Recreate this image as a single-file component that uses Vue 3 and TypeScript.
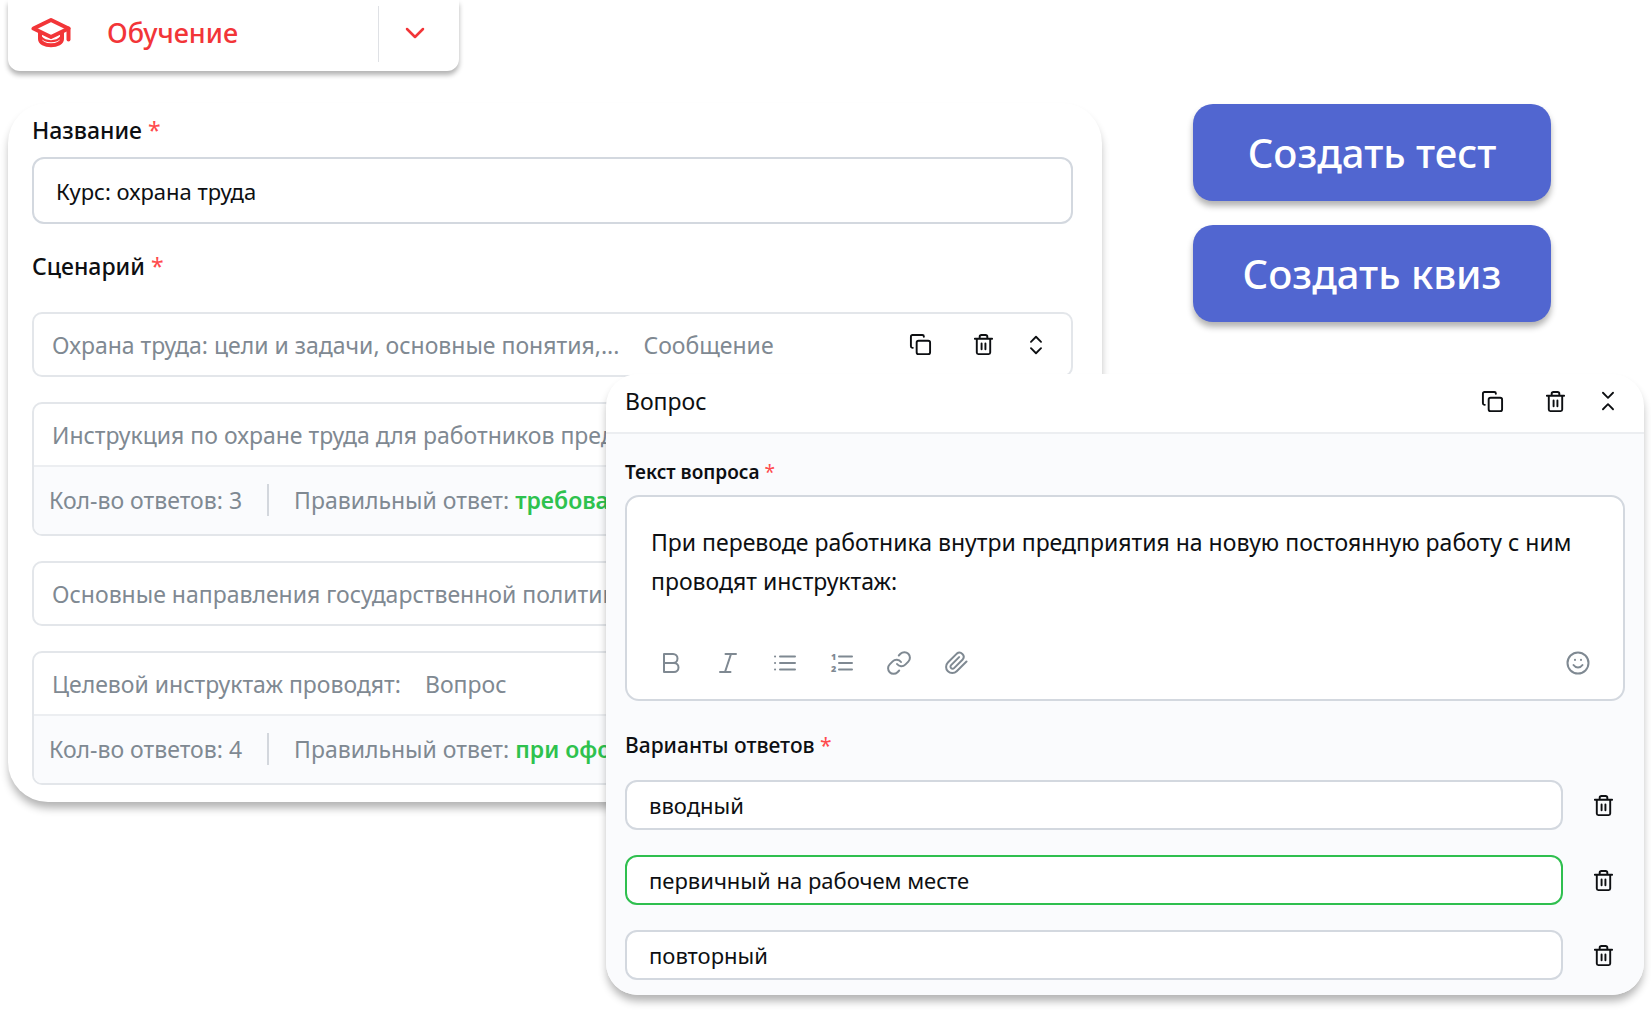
<script setup lang="ts">
import { ref } from 'vue'

interface ScenarioItem {
  title: string
  kind?: string
  answers?: number
  correct?: string
  actions?: boolean
}

interface Option {
  text: string
  correct: boolean
}

const courseName = ref('Курс: охрана труда')
const questionText = ref(
  'При переводе работника внутри предприятия на новую постоянную работу с ним проводят инструктаж:'
)

const scenario: ScenarioItem[] = [
  { title: 'Охрана труда: цели и задачи, основные понятия,...', kind: 'Сообщение', actions: true },
  { title: 'Инструкция по охране труда для работников предприятия', answers: 3, correct: 'требования' },
  { title: 'Основные направления государственной политики' },
  { title: 'Целевой инструктаж проводят:', kind: 'Вопрос', answers: 4, correct: 'при оформлении' }
]

const options = ref<Option[]>([
  { text: 'вводный', correct: false },
  { text: 'первичный на рабочем месте', correct: true },
  { text: 'повторный', correct: false }
])
</script>

<template>
  <svg class="sprite" aria-hidden="true">
    <symbol id="i-copy" viewBox="0 0 24 24">
      <rect x="8" y="8" width="14" height="14" rx="2" />
      <path d="M4 15.5H3.6A1.6 1.6 0 0 1 2 13.9V3.6A1.6 1.6 0 0 1 3.6 2h10.3a1.6 1.6 0 0 1 1.6 1.6V4" />
    </symbol>
    <symbol id="i-trash" viewBox="0 0 24 24">
      <path d="M3 6h18M5 6v14.400A1.600 1.600 0 0 0 6.600 22h10.800a1.600 1.600 0 0 0 1.600-1.600V6M8 6V4a2 2 0 0 1 2-2h4a2 2 0 0 1 2 2v2M10 11v6M14 11v6" />
    </symbol>
    <symbol id="i-expand" viewBox="0 0 24 24">
      <path d="M6.500 8.500l5.500-5.500 5.500 5.500M6.500 15.500l5.500 5.500 5.500-5.500" />
    </symbol>
    <symbol id="i-collapse" viewBox="0 0 24 24">
      <path d="M6.500 3l5.500 5.500 5.500-5.500M6.500 21l5.500-5.500 5.500 5.500" />
    </symbol>
  </svg>

  <main class="page">
    <div class="course">
      <nav class="tab">
        <a class="tab-link" href="#">
          <svg class="cap" viewBox="0 0 40 32" aria-hidden="true">
            <path d="M20 3L37.500 11.500 20 20 2.500 11.500z" />
            <path d="M9 15.500v6.500c0 3.700 4.800 6.300 11 6.300s11-2.600 11-6.300V15.500" />
            <path class="cap-fold" d="M10 20c2.500 3 6 4.200 10 4.200s7.500-1.200 10-4.200" />
            <path d="M37.500 11.500V22.500" />
          </svg>
          <span>Обучение</span>
        </a>
        <button class="tab-toggle" type="button" aria-label="Развернуть">
          <svg viewBox="0 0 24 24" aria-hidden="true"><path d="M4 8l8 8 8-8" /></svg>
        </button>
      </nav>

      <section class="card course-card">
        <label class="label" for="course-name">Название <b>*</b></label>
        <input id="course-name" v-model="courseName" class="field field-tall" type="text" />

        <h2 class="label label-scenario">Сценарий <b>*</b></h2>
        <ul class="scenario">
          <li v-for="item in scenario" :key="item.title" class="item">
            <div class="item-head">
              <span>{{ item.title }}</span>
              <span v-if="item.kind">{{ item.kind }}</span>
              <div v-if="item.actions" class="actions">
                <button type="button" aria-label="Копировать"><svg class="icon"><use href="#i-copy" /></svg></button>
                <button type="button" aria-label="Удалить"><svg class="icon"><use href="#i-trash" /></svg></button>
                <button type="button" aria-label="Раскрыть"><svg class="icon icon-small"><use href="#i-expand" /></svg></button>
              </div>
            </div>
            <div v-if="item.answers" class="item-foot">
              <span class="count">Кол-во ответов: {{ item.answers }}</span>
              <span>Правильный ответ: <strong>{{ item.correct }}</strong></span>
            </div>
          </li>
        </ul>
      </section>
    </div>

    <div class="create">
      <button type="button">Создать тест</button>
      <button type="button">Создать квиз</button>
    </div>

    <section class="card question-card">
      <header class="question-head">
        <h2>Вопрос</h2>
        <div class="actions">
          <button type="button" aria-label="Копировать"><svg class="icon"><use href="#i-copy" /></svg></button>
          <button type="button" aria-label="Удалить"><svg class="icon"><use href="#i-trash" /></svg></button>
          <button type="button" aria-label="Свернуть"><svg class="icon icon-small"><use href="#i-collapse" /></svg></button>
        </div>
      </header>

      <div class="question-body">
        <label class="label label-question" for="question-text">Текст вопроса <b>*</b></label>
        <div class="editor">
          <textarea id="question-text" v-model="questionText" rows="2"></textarea>
          <div class="toolbar">
            <button type="button" aria-label="Жирный">
              <svg viewBox="0 0 24 24"><path d="M5 3h9a4.500 4.500 0 0 1 0 9H5zM5 12h10a4.500 4.500 0 0 1 0 9H5z" /></svg>
            </button>
            <button type="button" aria-label="Курсив">
              <svg viewBox="0 0 24 24"><path d="M9.500 3H20M4 21h10.500M15 3L9 21" /></svg>
            </button>
            <button type="button" aria-label="Маркированный список">
              <svg viewBox="0 0 24 24"><path d="M7 5.500h15M7 12h15M7 18.500h15M2 5.500h.100M2 12h.100M2 18.500h.100" /></svg>
            </button>
            <button type="button" aria-label="Нумерованный список">
              <svg viewBox="0 0 24 24">
                <path d="M9 5.500h13M9 12h13M9 18.500h13" />
                <text x="1" y="9">1</text>
                <text x="1" y="21">2</text>
              </svg>
            </button>
            <button type="button" aria-label="Ссылка">
              <svg viewBox="0 0 24 24">
                <path d="M10 13a5.500 5.500 0 0 0 8.300.600l3-3a5.500 5.500 0 0 0-7.800-7.800l-1.700 1.700" />
                <path d="M14 11a5.500 5.500 0 0 0-8.300-.600l-3 3a5.500 5.500 0 0 0 7.800 7.800l1.700-1.700" />
              </svg>
            </button>
            <button type="button" aria-label="Вложение">
              <svg viewBox="0 0 24 24">
                <path d="M22.500 10.500l-9.800 9.800a6.200 6.200 0 0 1-8.800-8.800l8.900-8.900a4.200 4.200 0 0 1 5.900 5.900l-8.600 8.600a2.100 2.100 0 0 1-3-3l8-8" />
              </svg>
            </button>
            <button class="emoji" type="button" aria-label="Эмодзи">
              <svg viewBox="0 0 24 24">
                <circle cx="12" cy="12" r="10.500" />
                <path d="M7.500 14c1.200 1.700 2.700 2.500 4.500 2.500s3.300-.800 4.500-2.500M9 8.800v.100M15 8.800v.100" />
              </svg>
            </button>
          </div>
        </div>

        <h3 class="label label-options">Варианты ответов <b>*</b></h3>
        <ul class="options">
          <li v-for="(option, i) in options" :key="i">
            <input
              v-model="option.text"
              class="field"
              :class="{ correct: option.correct }"
              type="text"
              :aria-label="`Вариант ${i + 1}`"
            />
            <button type="button" aria-label="Удалить"><svg class="icon"><use href="#i-trash" /></svg></button>
          </li>
        </ul>
      </div>
    </section>
  </main>
</template>

<style>
body {
  margin: 0;
  background: #fff;
}
</style>

<style scoped>
.sprite {
  position: absolute;
  width: 0;
  height: 0;
}

.page {
  display: grid;
  grid-template-columns: 598fr 496fr 542fr;
  padding: 0 7px 15px 8px;
  font-family: 'Noto Sans', 'Open Sans', sans-serif;
  font-size: 23px;
  line-height: 32px;
  color: #0d0f12;
}

h2,
h3,
ul {
  margin: 0;
  padding: 0;
  list-style: none;
}

button,
input,
textarea {
  box-sizing: border-box;
  margin: 0;
  padding: 0;
  border: 0;
  background: none;
  color: inherit;
  font: inherit;
}

svg {
  display: block;
  fill: none;
  stroke: currentColor;
  stroke-width: 2;
  stroke-linecap: round;
  stroke-linejoin: round;
}

.course {
  grid-area: 1 / 1 / 2 / 3;
  min-width: 0;
}

/* Section tab */
.tab {
  display: flex;
  box-sizing: border-box;
  width: 451px;
  height: 71px;
  padding: 6px 0 9px;
  border-radius: 0 0 12px 12px;
  background: #fff;
  box-shadow: 0 4px 5px rgba(0, 0, 0, 0.3);
  color: #f23538;
}

.tab-link {
  display: flex;
  flex: 1;
  align-items: center;
  gap: 36px;
  padding: 0 0 2px 23px;
  color: inherit;
  font-size: 27px;
  font-weight: 500;
  text-decoration: none;
}

.cap {
  width: 40px;
  height: 32px;
  stroke-width: 4;
}

.cap-fold {
  stroke-width: 2;
}

.tab-toggle {
  display: flex;
  align-items: center;
  justify-content: center;
  width: 81px;
  padding: 0 9px 2px 0;
  border-left: 1px solid #dfe1e5;
}

.tab-toggle svg {
  width: 24px;
  height: 24px;
  stroke-width: 2.5;
}

/* Cards */
.card {
  box-sizing: border-box;
  background: #fff;
  box-shadow: 0 7px 8px -1px rgba(0, 0, 0, 0.3);
}

.course-card {
  margin-top: 32px;
  padding: 11px 29px 17px 24px;
  border-radius: 40px;
}

.label {
  display: block;
  font-size: 23px;
  font-weight: 500;
  line-height: 32px;
}

.label b {
  color: #ff4a4d;
  font-weight: 400;
}

.label-question {
  font-size: 19px;
  font-weight: 600;
}

.field {
  display: block;
  width: 100%;
  height: 50px;
  padding: 0 22px;
  border: 2px solid #d3d8df;
  border-radius: 12px;
  background: #fff;
  font-size: 22px;
}

.field-tall {
  height: 67px;
  margin-top: 11px;
}

.field.correct {
  border-color: #2fbf4f;
}

.label-scenario {
  margin-top: 26px;
}

.scenario {
  display: grid;
  gap: 25px;
  margin-top: 30px;
}

.item {
  overflow: hidden;
  border: 2px solid #e3e6ea;
  border-radius: 10px;
  color: #7f8992;
  white-space: nowrap;
}

.item-head {
  display: flex;
  align-items: center;
  gap: 24px;
  height: 61px;
  padding: 0 24px 0 18px;
}

.item-foot {
  display: flex;
  align-items: center;
  height: 65px;
  padding: 0 0 2px 15px;
  border-top: 2px solid #eceef1;
  background: #fafbfd;
}

.count {
  padding-right: 25px;
  margin-right: 25px;
  border-right: 2px solid #d3d7dd;
}

.item-foot strong {
  color: #2ec24e;
  font-weight: 600;
}

.actions {
  display: flex;
  align-items: center;
  gap: 40px;
  margin-left: auto;
  color: #0d0f12;
}

.actions button:last-child {
  margin-left: -10px;
}

.icon {
  width: 23px;
  height: 23px;
}

.icon-small {
  width: 22px;
  height: 22px;
}

/* Create buttons */
.create {
  display: grid;
  grid-area: 1 / 3 / 2 / 4;
  align-content: start;
  justify-items: center;
  gap: 24px;
  padding: 104px 2px 0 0;
}

.create button {
  width: 358px;
  height: 97px;
  border-radius: 20px;
  background: #5166d0;
  box-shadow: 0 5px 6px rgba(0, 0, 0, 0.3);
  color: #fff;
  font-size: 40px;
  font-weight: 500;
}

/* Question editor */
.question-card {
  z-index: 1;
  grid-area: 1 / 2 / 2 / 4;
  align-self: start;
  min-width: 0;
  margin-top: 374px;
  overflow: hidden;
  border-radius: 32px;
}

.question-head {
  display: flex;
  align-items: center;
  height: 54px;
  padding: 0 25px 4px 19px;
  border-bottom: 2px solid #eceef1;
}

.question-head h2 {
  font-size: 23px;
  font-weight: 400;
}

.question-body {
  padding: 22px 19px 15px;
  background: #fafbfd;
}

.editor {
  margin-top: 7px;
  padding: 26px 33px 24px 24px;
  border: 2px solid #d3d8df;
  border-radius: 14px;
  background: #fff;
}

.editor textarea {
  display: block;
  width: 100%;
  height: 111px;
  line-height: 39px;
  resize: none;
  overflow: hidden;
}

.toolbar {
  display: flex;
  gap: 33px;
  padding-left: 8px;
  margin-top: 17px;
  color: #7f8992;
}

.toolbar svg {
  width: 24px;
  height: 24px;
}

.toolbar text {
  fill: currentColor;
  stroke: none;
  font-size: 9px;
  font-weight: 900;
  line-height: 9px;
}

.emoji {
  margin-left: auto;
}

.label-options {
  margin-top: 28px;
  font-size: 21px;
}

.options {
  display: grid;
  gap: 25px;
  margin-top: 19px;
}

.options li {
  display: flex;
  align-items: center;
  gap: 29px;
  padding-right: 10px;
}
</style>
